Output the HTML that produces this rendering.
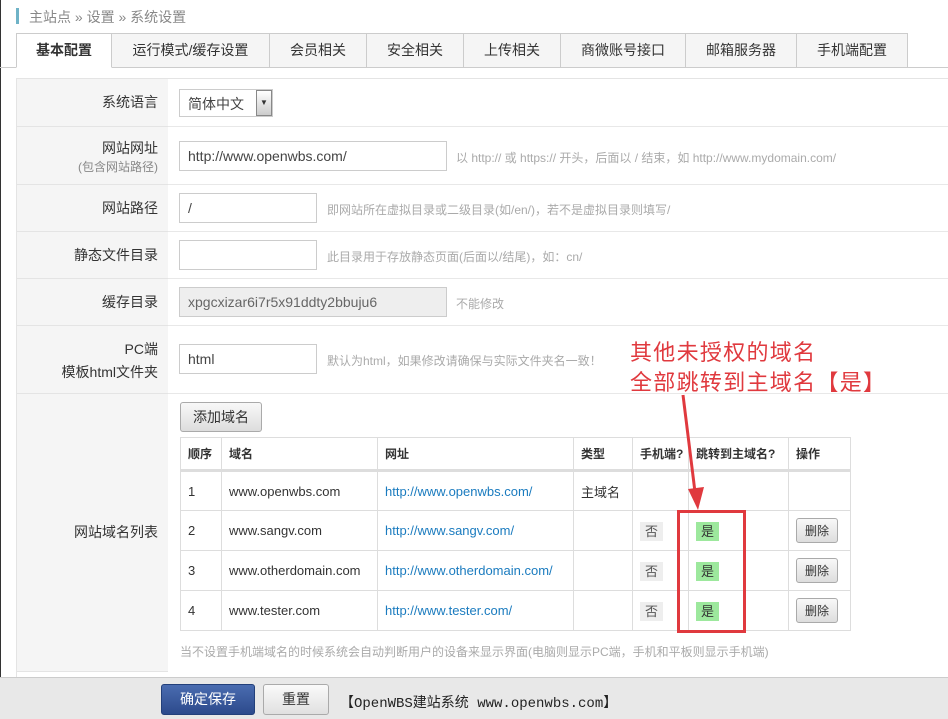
<!DOCTYPE html>
<html><head><meta charset="utf-8"><style>
*{margin:0;padding:0;box-sizing:border-box}
body{width:948px;height:719px;overflow:hidden;background:#fff;font-family:"Liberation Sans","Noto Sans CJK SC",sans-serif;font-size:13px;color:#333;position:relative}
.a{position:absolute}
.tab{position:absolute;top:33px;height:35px;border:1px solid #ccc;border-left:none;background:#f5f5f5;text-align:center;line-height:33px;font-size:14px;color:#333}
.lab{position:absolute;left:17px;width:151px;background:#f5f5f5;text-align:right;padding-right:10px;font-size:14px;color:#333;border-bottom:1px solid #e4e4e4}
.row{position:absolute;left:168px;width:780px;border-bottom:1px solid #e8e8e8}
.inp{position:absolute;height:30px;border:1px solid #ccc;padding-left:8px;line-height:28px;font-size:14px;color:#444;background:#fff}
.hint{position:absolute;font-size:12px;color:#aaa}
table{border-collapse:collapse;position:absolute;left:180px;top:437px}
td,th{border:1px solid #ddd;font-size:13px;padding:0 0 0 7px;text-align:left;color:#333}
th{font-weight:bold;font-size:12px;height:33px;border-bottom:3px solid #ddd}
td{height:40px}
a{color:#1a7bbf;text-decoration:none}
.no{background:#eee;padding:2px 5px;color:#555}
.yes{background:#9de89d;padding:2px 5px;color:#333}
.btn{display:inline-block;border:1px solid #aaa;border-radius:3px;background:linear-gradient(#f8f8f8,#ddd);font-size:12px;padding:3px 8px;color:#333}
</style></head><body>
<div class="a" style="left:0;top:0;width:1px;height:719px;background:#333"></div>
<div class="a" style="left:16px;top:8px;width:3px;height:16px;background:#6fb3c7"></div>
<div class="a" style="left:29px;top:7px;font-size:14px;color:#888">主站点 » 设置 » 系统设置</div>
<div class="a" style="left:0;top:67px;width:948px;height:1px;background:#ccc"></div>
<div class="tab" style="left:16px;width:96px;background:#fff;border-left:1px solid #ccc;border-bottom:1px solid #fff;font-weight:bold">基本配置</div>
<div class="tab" style="left:112px;width:158px">运行模式/缓存设置</div>
<div class="tab" style="left:270px;width:97px">会员相关</div>
<div class="tab" style="left:367px;width:97px">安全相关</div>
<div class="tab" style="left:464px;width:97px">上传相关</div>
<div class="tab" style="left:561px;width:125px">商微账号接口</div>
<div class="tab" style="left:686px;width:111px">邮箱服务器</div>
<div class="tab" style="left:797px;width:111px">手机端配置</div>
<div class="a" style="left:16px;top:78px;width:932px;height:1px;background:#e4e4e4"></div>
<div class="a" style="left:16px;top:78px;width:1px;height:600px;background:#e4e4e4"></div>

<div class="lab" style="top:79px;height:48px;line-height:47px">系统语言</div><div class="row" style="top:79px;height:48px"></div>
<div class="inp" style="left:179px;top:89px;width:94px;height:28px">简体中文</div>
<div class="a" style="left:256px;top:90px;width:16px;height:26px;border:1px solid #888;background:linear-gradient(#fff,#ccc);font-size:8px;text-align:center;line-height:24px">▼</div>

<div class="lab" style="top:127px;height:58px;padding-top:12px;line-height:18px">网站网址<br><span style="font-size:12px;color:#888">(包含网站路径)</span></div><div class="row" style="top:127px;height:58px"></div>
<div class="inp" style="left:179px;top:141px;width:268px">http://www.openwbs.com/</div>
<div class="hint" style="left:456px;top:149px">以 http:// 或 https:// 开头，后面以 / 结束，如 http://www.mydomain.com/</div>

<div class="lab" style="top:185px;height:47px;line-height:46px">网站路径</div><div class="row" style="top:185px;height:47px"></div>
<div class="inp" style="left:179px;top:193px;width:138px">/</div>
<div class="hint" style="left:327px;top:201px">即网站所在虚拟目录或二级目录(如/en/)，若不是虚拟目录则填写/</div>

<div class="lab" style="top:232px;height:47px;line-height:46px">静态文件目录</div><div class="row" style="top:232px;height:47px"></div>
<div class="inp" style="left:179px;top:240px;width:138px"></div>
<div class="hint" style="left:327px;top:248px">此目录用于存放静态页面(后面以/结尾)，如：cn/</div>

<div class="lab" style="top:279px;height:47px;line-height:46px">缓存目录</div><div class="row" style="top:279px;height:47px"></div>
<div class="inp" style="left:179px;top:287px;width:268px;background:#eee;color:#666">xpgcxizar6i7r5x91ddty2bbuju6</div>
<div class="hint" style="left:456px;top:295px">不能修改</div>

<div class="lab" style="top:326px;height:68px;padding-top:12px;line-height:23px">PC端<br>模板html文件夹</div><div class="row" style="top:326px;height:68px"></div>
<div class="inp" style="left:179px;top:344px;width:138px">html</div>
<div class="hint" style="left:327px;top:352px">默认为html，如果修改请确保与实际文件夹名一致！</div>

<div class="lab" style="top:394px;height:278px;line-height:276px">网站域名列表</div>
<div class="a btn" style="left:180px;top:402px;height:30px;font-size:14px;line-height:22px;padding:3px 12px">添加域名</div>
<table>
<tr><th style="width:41px">顺序</th><th style="width:156px">域名</th><th style="width:196px">网址</th><th style="width:59px">类型</th><th style="width:56px">手机端?</th><th style="width:100px">跳转到主域名?</th><th style="width:62px">操作</th></tr>
<tr><td style="height:38px">1</td><td>www.openwbs.com</td><td><a>http://www.openwbs.com/</a></td><td>主域名</td><td></td><td></td><td></td></tr>
<tr><td>2</td><td>www.sangv.com</td><td><a>http://www.sangv.com/</a></td><td></td><td><span class="no">否</span></td><td><span class="yes">是</span></td><td><span class="btn">删除</span></td></tr>
<tr><td>3</td><td>www.otherdomain.com</td><td><a>http://www.otherdomain.com/</a></td><td></td><td><span class="no">否</span></td><td><span class="yes">是</span></td><td><span class="btn">删除</span></td></tr>
<tr><td>4</td><td>www.tester.com</td><td><a>http://www.tester.com/</a></td><td></td><td><span class="no">否</span></td><td><span class="yes">是</span></td><td><span class="btn">删除</span></td></tr>
</table>
<div class="hint" style="left:180px;top:643px">当不设置手机端域名的时候系统会自动判断用户的设备来显示界面(电脑则显示PC端，手机和平板则显示手机端)</div>

<div class="a" style="left:677px;top:510px;width:69px;height:123px;border:3px solid #e0393e"></div>
<svg class="a" style="left:670px;top:392px" width="40" height="122"><line x1="13" y1="3" x2="25" y2="100" stroke="#e0393e" stroke-width="3"/><polygon points="18,97 34,95 28,118" fill="#e0393e"/></svg>
<div class="a" style="left:630px;top:336px;font-size:22px;letter-spacing:1.3px;line-height:30px;color:#e0393e;font-family:'Noto Sans CJK SC',sans-serif">其他未授权的域名<br>全部跳转到主域名【是】</div>

<div class="a" style="left:0;top:677px;width:948px;height:42px;background:#e8e8e8;border-top:1px solid #ccc"></div>
<div class="a" style="left:161px;top:684px;width:94px;height:31px;background:linear-gradient(#4a6cb0,#2c4a8c);border:1px solid #23407a;border-radius:3px;color:#fff;font-size:14px;text-align:center;line-height:29px">确定保存</div>
<div class="a" style="left:263px;top:684px;width:66px;height:31px;background:linear-gradient(#fafafa,#e0e0e0);border:1px solid #aaa;border-radius:3px;font-size:14px;text-align:center;line-height:29px">重置</div>
<div class="a" style="left:340px;top:692px;font-size:14px;font-family:'Liberation Mono','Noto Sans CJK SC',monospace;color:#222">【OpenWBS建站系统 www.openwbs.com】</div>
</body></html>
